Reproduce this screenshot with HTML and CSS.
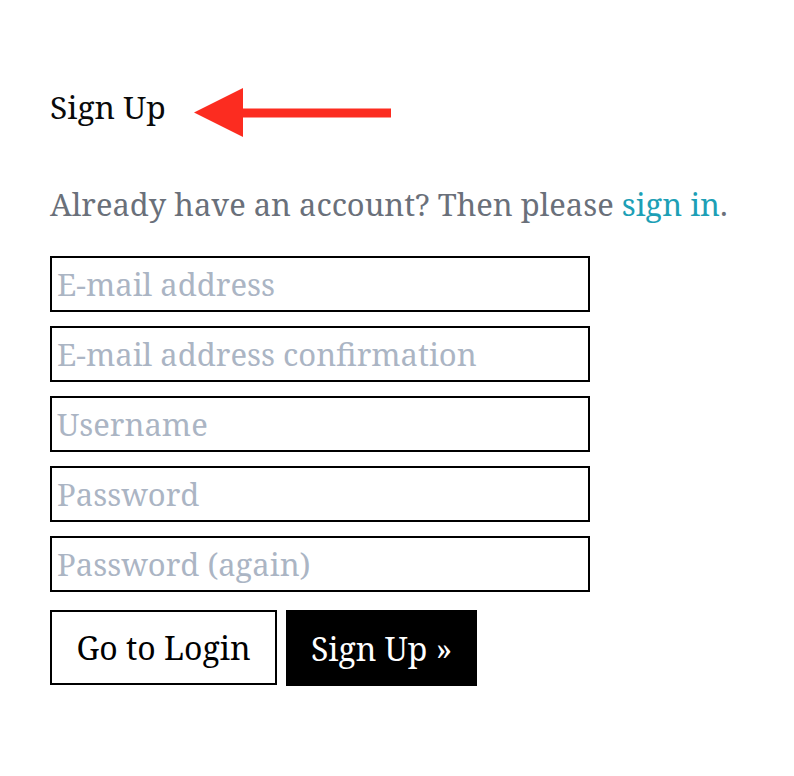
FILE: index.html
```html
<!DOCTYPE html>
<html lang="en">
<head>
<meta charset="utf-8">
<title>Sign Up</title>
<link rel="stylesheet" href="styles.css">
</head>
<body>
<main class="page">
  <div class="title-row">
    <h1 class="title">Sign Up</h1>
    <svg class="arrow" width="198" height="51" viewBox="0 0 198 51" aria-hidden="true">
      <path d="M0 25.5 L49 1 L49 21.5 L197 21.5 L197 30.5 L49 30.5 L49 50 Z" fill="#fc2c20"/>
    </svg>
  </div>
  <p class="lead">Already have an account? Then please <a class="link" href="#">sign in</a>.</p>
  <form class="form">
    <input class="field" type="email" placeholder="E-mail address">
    <input class="field" type="email" placeholder="E-mail address confirmation">
    <input class="field" type="text" placeholder="Username">
    <input class="field" type="password" placeholder="Password">
    <input class="field" type="password" placeholder="Password (again)">
    <div class="actions">
      <button class="btn btn-outline" type="button">Go to Login</button>
      <button class="btn btn-solid" type="submit">Sign Up »</button>
    </div>
  </form>
</main>
</body>
</html>
```
FILE: styles.css
```css
* { box-sizing: border-box; }
html, body { margin: 0; background: #fff; }
body { font-family: "Noto Serif", "DejaVu Serif", serif; }
.page { padding: 86px 0 0 50px; }
.title-row { display: flex; align-items: flex-start; gap: 28px; }
.title { margin: 0; font-size: 31.8px; font-weight: 400; line-height: 42px; color: #0a0a0a; }
.arrow { display: block; margin-top: 1px; }
.lead { margin: 45px 0 0; font-size: 30.9px; line-height: 42px; color: #6a707a; white-space: nowrap; }
.link { color: #1d9fb6; text-decoration: none; }
.form { margin-top: 31px; display: flex; flex-direction: column; gap: 14px; width: 540px; }
.field {
  display: block; width: 540px; height: 56px; margin: 0;
  border: 2px solid #000; border-radius: 0; padding: 0 5px;
  font-family: inherit; font-size: 31px; color: #222; background: #fff; outline: none;
}
.field::placeholder { color: #abb5c4; opacity: 1; }
.actions { display: flex; gap: 9px; margin-top: 4px; }
.btn {
  height: 76px; margin: 0; padding: 0; border-radius: 0;
  font-family: inherit; font-size: 32px; cursor: pointer;
}
.btn-outline { width: 227px; height: 75px; background: #fff; color: #000; border: 2px solid #000; }
.btn-solid { width: 191px; background: #000; color: #fff; border: 0; }
```
